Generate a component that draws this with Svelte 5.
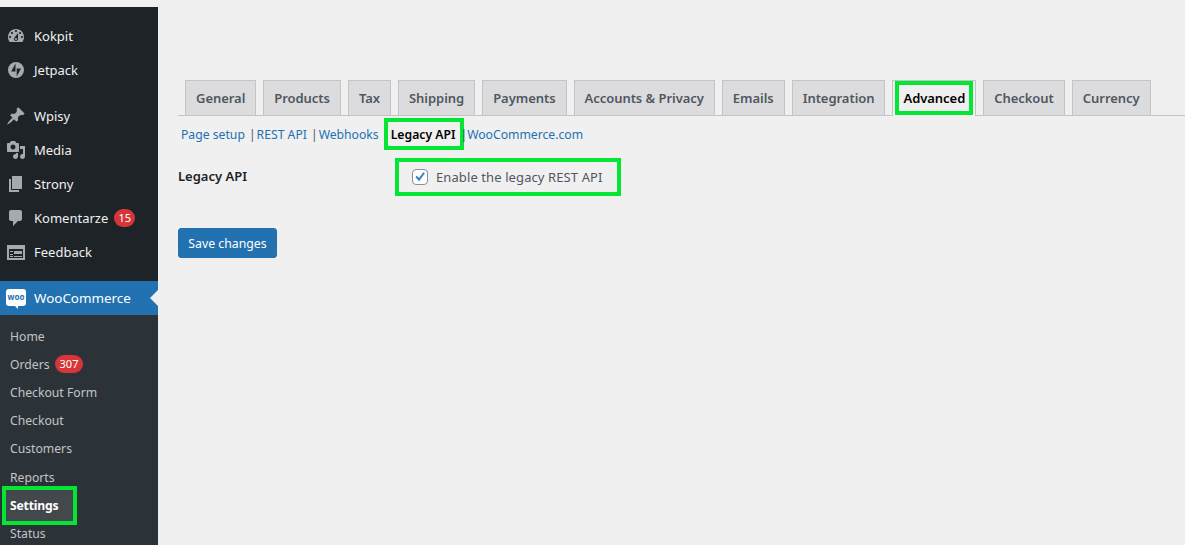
<script lang="ts">
const topItems = [
  { label: 'Kokpit', d: 'M3.76 16h12.48c1.1-1.37 1.76-3.11 1.76-5 0-4.42-3.58-8-8-8s-8 3.58-8 8c0 1.89.66 3.63 1.76 5zM10 4c.55 0 1 .45 1 1s-.45 1-1 1-1-.45-1-1 .45-1 1-1zM6 6c.55 0 1 .45 1 1s-.45 1-1 1-1-.45-1-1 .45-1 1-1zm8 0c.55 0 1 .45 1 1s-.45 1-1 1-1-.45-1-1 .45-1 1-1zm-5.37 5.55L12 7v6c0 1.1-.9 2-2 2s-2-.9-2-2c0-.57.24-1.08.63-1.45zM4 10c.55 0 1 .45 1 1s-.45 1-1 1-1-.45-1-1 .45-1 1-1zm12 0c.55 0 1 .45 1 1s-.45 1-1 1-1-.45-1-1 .45-1 1-1zm-5 3c0-.55-.45-1-1-1s-1 .45-1 1 .45 1 1 1 1-.45 1-1z' },
  { label: 'Jetpack', d: 'M10 2a8 8 0 1 0 0 16a8 8 0 0 0 0-16zM9.5 11.500H5.200L9.500 3.500zM10.700 8.500H15L10.700 16.500z' }
];
const midItems = [
  { label: 'Wpisy', d: 'M10.44 3.02l1.82-1.82 6.36 6.35-1.83 1.82c-1.05-.68-2.48-.57-3.41.36l-.75.75c-.92.93-1.04 2.35-.35 3.41l-1.83 1.82-2.41-2.41-2.8 2.79c-.42.42-3.38 2.71-3.8 2.29s1.86-3.39 2.28-3.81l2.79-2.79L4.1 9.36l1.83-1.82c1.05.69 2.48.57 3.4-.36l.75-.75c.93-.92 1.05-2.35.36-3.41z' },
  { label: 'Media', d: 'M13 11V4c0-.55-.45-1-1-1h-1.67L9 1H5L3.67 3H2c-.55 0-1 .45-1 1v7c0 .55.45 1 1 1h10c.55 0 1-.45 1-1zM7 4.500c1.380 0 2.500 1.120 2.500 2.500S8.380 9.500 7 9.500 4.500 8.380 4.500 7 5.620 4.500 7 4.500zM14 6h5v10.500c0 1.380-1.120 2.500-2.500 2.500S14 17.880 14 16.500s1.120-2.500 2.500-2.500c.17 0 .34.02.5.05V9h-3V6zm-4 8.050V13h2v3.500c0 1.380-1.120 2.500-2.500 2.500S7 17.880 7 16.500 8.120 14 9.500 14c.17 0 .34.02.5.05z' },
  { label: 'Strony', d: 'M6 15V2h10v13H6zm-1 1h8v2H3V5h2v11z' },
  { label: 'Komentarze', d: 'M5 2h9c1.100 0 2 .9 2 2v7c0 1.100-.9 2-2 2h-2l-5 5v-5H5c-1.100 0-2-.9-2-2V4c0-1.100.9-2 2-2z', badge: '15' },
  { label: 'Feedback', d: 'M1 3h18v15H1zM3 7v9h14V7zM4 9h3v1H4zM8 9h8v3H8zM4 12h3v1H4zM4 14h3v1H4zM8 14h8v1H8z' }
];
const subItems = [
  { label: 'Home' },
  { label: 'Orders', badge: '307' },
  { label: 'Checkout Form' },
  { label: 'Checkout' },
  { label: 'Customers' },
  { label: 'Reports' },
  { label: 'Settings', current: true },
  { label: 'Status' }
];
const tabs = ['General', 'Products', 'Tax', 'Shipping', 'Payments', 'Accounts & Privacy', 'Emails', 'Integration', 'Advanced', 'Checkout', 'Currency'];
</script>

<div class="page">
  <aside class="sidebar">
    <ul class="menu first">
      {#each topItems as item}
        <li class="menu-item">
          <svg class="icon" viewBox="0 0 20 20"><path fill-rule="evenodd" d={item.d} /></svg>
          <span>{item.label}</span>
        </li>
      {/each}
    </ul>
    <ul class="menu second">
      {#each midItems as item}
        <li class="menu-item">
          <svg class="icon" viewBox="0 0 20 20"><path fill-rule="evenodd" d={item.d} /></svg>
          <span>{item.label}</span>
          {#if item.badge}<b class="badge">{item.badge}</b>{/if}
        </li>
      {/each}
    </ul>
    <div class="woo">
      <span class="woo-logo">woo</span>
      <span>WooCommerce</span>
    </div>
    <ul class="submenu">
      {#each subItems as item}
        <li class="sub-item" class:current={item.current}>
          <span class="sub-label">{item.label}</span>
          {#if item.badge}<b class="badge">{item.badge}</b>{/if}
        </li>
      {/each}
    </ul>
  </aside>

  <main class="content">
    <nav class="tabs">
      {#each tabs as tab}
        <span class="tab" class:active={tab === 'Advanced'}>
          <span class="tab-text">{tab}</span>
        </span>
      {/each}
    </nav>
    <div class="sublinks">
      <a href="#setup">Page setup</a>
      <span class="sep">|</span>
      <a href="#rest">REST API</a>
      <span class="sep">|</span>
      <a href="#hooks">Webhooks</a>
      <strong class="legacy">Legacy API</strong>
      <span class="sep last">|</span>
      <a href="#woo">WooCommerce.com</a>
    </div>
    <div class="field">
      <span class="field-label">Legacy API</span>
      <label class="check">
        <span class="box">
          <svg viewBox="0 0 16 16"><path d="M2.800 8.300l1.700-1.700 2.300 2.500L11.800 2.500l1.800 1.300-6.600 9z" /></svg>
        </span>
        Enable the legacy REST API
      </label>
    </div>
    <button class="save">Save changes</button>
  </main>
</div>

<style>
  :global(body) {
    margin: 0;
    background: #f0f0f1;
    overflow: hidden;
  }

  .page {
    display: flex;
    height: 545px;
    overflow: hidden;
    font-family: "Noto Sans", "Open Sans", sans-serif;
    font-size: 13px;
    color: #3c434a;
  }

  .sidebar {
    width: 158px;
    flex: none;
    margin-top: 7px;
    background: #1d2327;
    color: #f0f0f1;
  }

  ul {
    list-style: none;
    margin: 0;
    padding: 0;
  }

  .menu.first {
    padding-top: 12px;
  }

  .menu.second {
    margin-top: 12px;
  }

  .menu-item {
    display: flex;
    align-items: center;
    height: 34px;
    font-size: 13px;
  }

  .icon {
    width: 20px;
    height: 20px;
    margin: 0 8px 0 6px;
    fill: #a7aaad;
    flex: none;
  }

  .badge {
    margin-left: 6px;
    padding: 0 4px;
    min-width: 13px;
    height: 18px;
    line-height: 18px;
    border-radius: 9px;
    background: #d63638;
    color: #fff;
    font-size: 11px;
    font-weight: 400;
    text-align: center;
  }

  .sub-item .badge {
    margin-left: 5px;
    padding: 0 5px;
  }

  .woo {
    display: flex;
    align-items: center;
    height: 34px;
    margin-top: 12px;
    background: #2271b1;
    color: #fff;
    font-size: 13.400px;
    position: relative;
  }

  .woo::after {
    content: "";
    position: absolute;
    right: 0;
    top: 9px;
    border: 8px solid transparent;
    border-right-color: #f0f0f1;
    border-left: 0;
  }

  .woo-logo {
    position: relative;
    width: 20px;
    height: 17px;
    margin: -2px 8px 0 6px;
    background: #fff;
    border-radius: 3px;
    color: #2271b1;
    font-size: 8px;
    font-weight: 700;
    line-height: 16px;
    text-align: center;
    flex: none;
  }

  .woo-logo::after {
    content: "";
    position: absolute;
    left: 9px;
    bottom: -3px;
    border-top: 3px solid #fff;
    border-left: 3px solid transparent;
  }

  .submenu {
    background: #2c3338;
    padding-top: 7px;
    height: 240px;
  }

  .sub-item {
    display: flex;
    align-items: center;
    height: 28px;
    padding-left: 10px;
    color: #c3c4c7;
    font-size: 12.200px;
  }

  .sub-item:nth-child(6) {
    margin-top: 1px;
  }

  .sub-item.current {
    color: #fff;
    font-weight: 700;
    letter-spacing: -0.2px;
  }

  .current .sub-label {
    box-sizing: border-box;
    width: 67px;
    height: 31px;
    line-height: 31px;
    margin-left: -4px;
    padding-left: 4px;
    background: #43484d;
    outline: 4px solid #05e634;
  }

  .content {
    flex: 1;
    padding: 80px 0 0 20px;
  }

  .tabs {
    display: flex;
    gap: 7px;
    height: 35px;
    padding-left: 7px;
    border-bottom: 1px solid #c3c4c7;
  }

  .tab {
    display: flex;
    align-items: center;
    padding: 0 10px;
    height: 35px;
    box-sizing: border-box;
    background: #dcdcde;
    border: 1px solid #c3c4c7;
    border-bottom: 0;
    color: #50575e;
    font-weight: 600;
    font-size: 13px;
    letter-spacing: -0.05px;
  }

  .tab.active {
    height: 36px;
    padding: 0 2px;
    background: #f0f0f1;
    color: #000;
  }

  .active .tab-text {
    align-self: stretch;
    display: flex;
    align-items: center;
    margin-bottom: 1px;
    padding: 0 8px;
    outline: 4px solid #05e634;
    outline-offset: -4px;
  }

  .sublinks {
    display: flex;
    align-items: center;
    height: 32px;
    padding: 2px 0 0 3px;
    font-size: 12.200px;
  }

  a {
    color: #2271b1;
    text-decoration: none;
  }

  .sep {
    color: #50575e;
    margin: 0 1px 0 4px;
  }

  .sep.last {
    margin: 0 0 0 -4px;
  }

  .legacy {
    display: flex;
    align-items: center;
    height: 32px;
    box-sizing: border-box;
    margin: 0 0 0 5px;
    padding: 0 9px 0 7px;
    color: #000;
    font-weight: 600;
    outline: 4px solid #05e634;
    outline-offset: -4px;
  }

  .field {
    display: flex;
    align-items: flex-start;
    margin-top: 8px;
  }

  .field-label {
    width: 217px;
    margin-top: 9px;
    color: #1d2327;
    font-size: 13px;
    font-weight: 600;
  }

  .check {
    display: flex;
    align-items: center;
    gap: 8px;
    width: 226px;
    height: 38px;
    box-sizing: border-box;
    padding-left: 13px;
    border: 4px solid #05e634;
    color: #50575e;
    letter-spacing: 0.1px;
  }

  .box {
    box-sizing: border-box;
    width: 16px;
    height: 16px;
    border: 1px solid #8c8f94;
    border-radius: 4px;
    background: #fff;
    flex: none;
  }

  .box svg {
    display: block;
    width: 14px;
    height: 14px;
    fill: #3582c4;
  }

  .save {
    display: block;
    margin-top: 32px;
    width: 99px;
    height: 30px;
    padding: 0;
    background: #2271b1;
    border: 1px solid #2271b1;
    border-radius: 3px;
    color: #fff;
    font: inherit;
    font-size: 12.300px;
  }
</style>
